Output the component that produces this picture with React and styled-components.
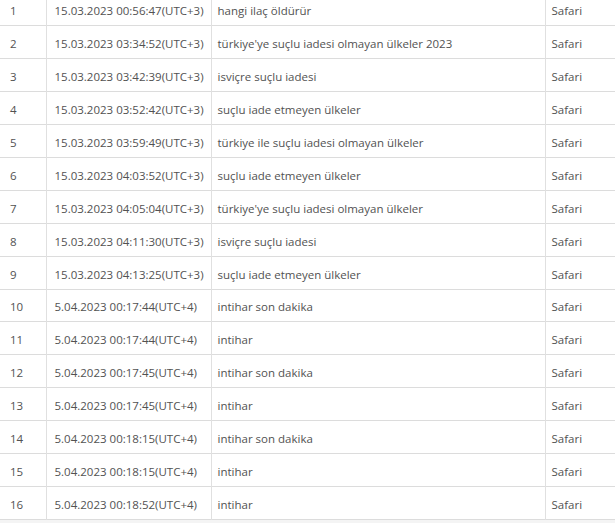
import React from "react";
import styled, { createGlobalStyle } from "styled-components";

const GlobalStyle = createGlobalStyle`
  html, body {
    margin: 0;
    padding: 0;
    background: #f4f4f4;
    overflow: hidden;
  }
`;

const Page = styled.div`
  width: 615px;
  height: 523px;
  overflow: hidden;
  background: #f4f4f4;
`;

const Table = styled.table`
  width: 625px;
  margin-top: -7px;
  border-collapse: collapse;
  table-layout: fixed;
  background: #fff;
  font-family: "Open Sans", "Noto Sans", sans-serif;
  font-size: 11.5px;
  color: #525252;
`;

const Col = styled.col`
  width: ${(props) => props.w}px;
`;

const Row = styled.tr`
  height: 32.9px;
  border-bottom: 1px solid #dcdcdc;
`;

const Cell = styled.td`
  padding: 3px 0 0 ${(props) => props.pad || 7}px;
  border-left: ${(props) => (props.first ? "none" : "1px solid #e0e0e0")};
  white-space: nowrap;
  overflow: hidden;
  vertical-align: middle;
`;

const rows = [
  ["15.03.2023 00:56:47(UTC+3)", "hangi ilaç öldürür"],
  ["15.03.2023 03:34:52(UTC+3)", "türkiye'ye suçlu iadesi olmayan ülkeler 2023"],
  ["15.03.2023 03:42:39(UTC+3)", "isviçre suçlu iadesi"],
  ["15.03.2023 03:52:42(UTC+3)", "suçlu iade etmeyen ülkeler"],
  ["15.03.2023 03:59:49(UTC+3)", "türkiye ile suçlu iadesi olmayan ülkeler"],
  ["15.03.2023 04:03:52(UTC+3)", "suçlu iade etmeyen ülkeler"],
  ["15.03.2023 04:05:04(UTC+3)", "türkiye'ye suçlu iadesi olmayan ülkeler"],
  ["15.03.2023 04:11:30(UTC+3)", "isviçre suçlu iadesi"],
  ["15.03.2023 04:13:25(UTC+3)", "suçlu iade etmeyen ülkeler"],
  ["5.04.2023 00:17:44(UTC+4)", "intihar son dakika"],
  ["5.04.2023 00:17:44(UTC+4)", "intihar"],
  ["5.04.2023 00:17:45(UTC+4)", "intihar son dakika"],
  ["5.04.2023 00:17:45(UTC+4)", "intihar"],
  ["5.04.2023 00:18:15(UTC+4)", "intihar son dakika"],
  ["5.04.2023 00:18:15(UTC+4)", "intihar"],
  ["5.04.2023 00:18:52(UTC+4)", "intihar"],
];

export default function App() {
  return (
    <Page>
      <GlobalStyle />
      <Table>
        <colgroup>
          <Col w={46} />
          <Col w={165} />
          <Col w={334} />
          <Col w={80} />
        </colgroup>
        <tbody>
          {rows.map(([date, query], i) => (
            <Row key={i}>
              <Cell first pad={10}>{i + 1}</Cell>
              <Cell pad={8}>{date}</Cell>
              <Cell pad={6}>{query}</Cell>
              <Cell pad={6}>Safari</Cell>
            </Row>
          ))}
        </tbody>
      </Table>
    </Page>
  );
}
